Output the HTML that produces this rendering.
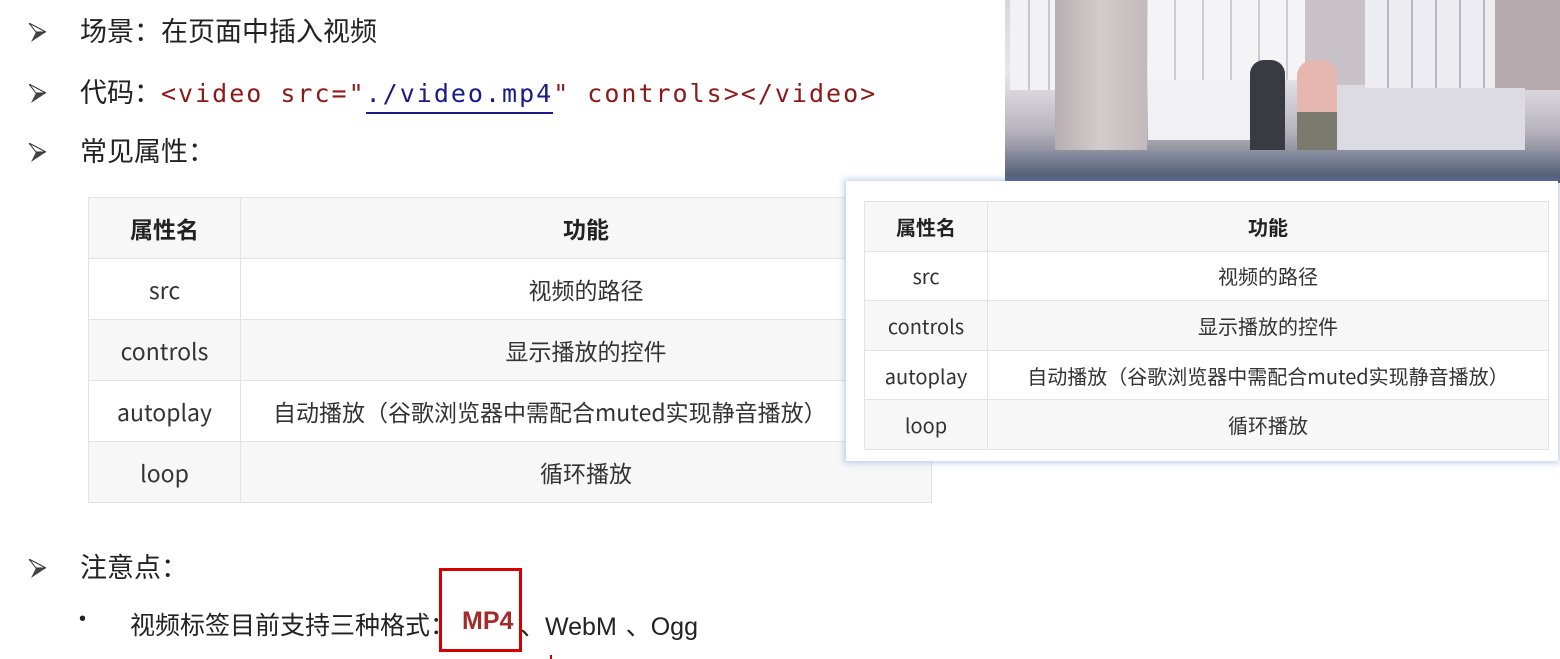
<!DOCTYPE html>
<html><head><meta charset="utf-8"><style>
body{margin:0;width:1560px;height:659px;background:#fff;position:relative;overflow:hidden;font-family:"Liberation Sans","Noto Sans CJK SC",sans-serif;color:#222}
.ab{position:absolute;white-space:nowrap}
.arr{position:absolute;width:17px;height:19px}
.h{font-size:27px;line-height:1}
.code{font-family:"DejaVu Sans Mono","Liberation Mono",monospace;font-size:25px;letter-spacing:2px;color:#8b1a1a}
.code .u{color:#1a1a8b;border-bottom:2px solid #1a1a8b;padding-bottom:4px}
table{border-collapse:collapse;position:absolute;font-family:"Noto Sans CJK SC",sans-serif}
td,th{border:1px solid #e3e3e3;text-align:center;padding:0;color:#333;font-weight:normal}
th{font-weight:bold;color:#222}
tr.g td,tr.g th{background:#f7f7f7}
.t1{left:88px;top:197px;width:844px;font-size:23px}
.t1 tr{height:61px}
.t2{left:864px;top:201px;width:685px;font-size:20px}
.t2 tr{height:49.6px}
.vid{position:absolute;left:1005px;top:0;width:555px;height:183px;overflow:hidden;background:linear-gradient(180deg,#d9d6dd 0%,#e8e6ea 40%,#b9b6c0 70%,#5d6272 100%)}
</style></head><body>
<svg width="0" height="0" style="position:absolute"><defs><symbol id="ar" viewBox="0 0 17 19"><path d="M0 0 L17 9 L2 19 L7 9 Z" fill="#444"/><path d="M0 0 L17 9 L7 9 Z" fill="#fff" stroke="#333" stroke-width="1"/></symbol></defs></svg>
<div class="vid">
 <div style="position:absolute;left:5px;top:0;width:45px;height:90px;background:repeating-linear-gradient(90deg,#f2f1f4 0 18px,#c9c6cc 18px 20px)"></div>
 <div style="position:absolute;left:50px;top:0;width:92px;height:183px;background:linear-gradient(90deg,#b8aeb0,#d3cbcc,#c3b9bb)"></div>
 <div style="position:absolute;left:143px;top:0;width:160px;height:80px;background:repeating-linear-gradient(90deg,#f4f3f6 0 26px,#cfcbd0 26px 28px)"></div>
 <div style="position:absolute;left:300px;top:0;width:60px;height:85px;background:#c9c2c8"></div>
 <div style="position:absolute;left:360px;top:0;width:140px;height:88px;background:repeating-linear-gradient(90deg,#edecf1 0 22px,#b9b7c0 22px 24px)"></div>
 <div style="position:absolute;left:490px;top:0;width:65px;height:90px;background:#b6a9ad"></div>
 <div style="position:absolute;left:143px;top:80px;width:110px;height:60px;background:#f1f0f3"></div>
 <div style="position:absolute;left:320px;top:88px;width:200px;height:70px;background:#dcdbe3"></div>
 <div style="position:absolute;left:245px;top:60px;width:35px;height:110px;background:#3a3a42;border-radius:14px 14px 4px 4px"></div>
 <div style="position:absolute;left:292px;top:60px;width:40px;height:115px;background:linear-gradient(180deg,#e6b7ae 0 45%,#7b7a6e 45%);border-radius:16px 16px 4px 4px"></div>
 <div style="position:absolute;left:0;top:150px;width:555px;height:33px;background:linear-gradient(180deg,#8e93a4,#44506a)"></div>
</div>

<svg class="arr" style="left:29px;top:23px"><use href="#ar"/></svg>
<div class="ab h" style="left:80px;top:19px">场景：在页面中插入视频</div>
<svg class="arr" style="left:29px;top:84px"><use href="#ar"/></svg>
<div class="ab h" style="left:80px;top:80px">代码：<span class="code">&lt;video src="<span class="u">./video.mp4</span>" controls&gt;&lt;/video&gt;</span></div>
<svg class="arr" style="left:29px;top:143px"><use href="#ar"/></svg>
<div class="ab h" style="left:80px;top:139px">常见属性：</div>

<table class="t1">
<tr class="g"><th style="width:151px">属性名</th><th>功能</th></tr>
<tr><td>src</td><td>视频的路径</td></tr>
<tr class="g"><td>controls</td><td>显示播放的控件</td></tr>
<tr><td>autoplay</td><td style="text-align:left;padding-left:32px">自动播放（谷歌浏览器中需配合muted实现静音播放）</td></tr>
<tr class="g"><td>loop</td><td>循环播放</td></tr>
</table>
<div style="position:absolute;left:846px;top:181px;width:712px;height:280px;background:#fff;box-shadow:0 0 6px 2px rgba(120,150,220,.45)"></div>
<table class="t2">
<tr class="g"><th style="width:122px">属性名</th><th>功能</th></tr>
<tr><td>src</td><td>视频的路径</td></tr>
<tr class="g"><td>controls</td><td>显示播放的控件</td></tr>
<tr><td>autoplay</td><td>自动播放（谷歌浏览器中需配合muted实现静音播放）</td></tr>
<tr class="g"><td>loop</td><td>循环播放</td></tr>
</table>

<svg class="arr" style="left:29px;top:559px"><use href="#ar"/></svg>
<div class="ab h" style="left:80px;top:555px">注意点：</div>
<div class="ab" style="left:79px;top:608px;font-size:20px">•</div>
<div class="ab" style="left:130px;top:606px;font-size:25px">视频标签目前支持三种格式：</div>
<div class="ab" style="left:462px;top:607px;font-size:25px;font-weight:bold;color:#a52a2a">MP4</div>
<div class="ab" style="left:520px;top:607px;font-size:25px;word-spacing:2px">、WebM 、Ogg</div>
<div style="position:absolute;left:439px;top:568px;width:77px;height:78px;border:3px solid #d40000"></div>
<div style="position:absolute;left:550px;top:655px;width:2px;height:4px;background:#c00"></div>
</body></html>
